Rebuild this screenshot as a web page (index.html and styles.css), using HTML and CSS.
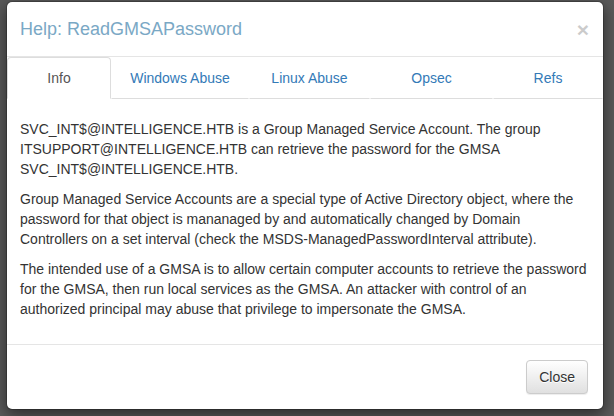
FILE: index.html
```html
<!DOCTYPE html>
<html>
<head>
<meta charset="utf-8">
<link rel="stylesheet" href="styles.css">
</head>
<body>
<div class="modal">
  <div class="modal-header">
    <span class="close">&times;</span>
    <h4 class="modal-title">Help: ReadGMSAPassword</h4>
  </div>
  <ul class="tabs">
    <li class="tab active">Info</li>
    <li class="tab">Windows Abuse</li>
    <li class="tab">Linux Abuse</li>
    <li class="tab">Opsec</li>
    <li class="tab">Refs</li>
  </ul>
  <div class="modal-body">
    <p>SVC_INT$@INTELLIGENCE.HTB is a Group Managed Service Account. The group ITSUPPORT@INTELLIGENCE.HTB can retrieve the password for the GMSA SVC_INT$@INTELLIGENCE.HTB.</p>
    <p>Group Managed Service Accounts are a special type of Active Directory object, where the password for that object is mananaged by and automatically changed by Domain Controllers on a set interval (check the MSDS-ManagedPasswordInterval attribute).</p>
    <p>The intended use of a GMSA is to allow certain computer accounts to retrieve the password for the GMSA, then run local services as the GMSA. An attacker with control of an authorized principal may abuse that privilege to impersonate the GMSA.</p>
  </div>
  <div class="modal-footer">
    <button class="btn">Close</button>
  </div>
</div>
</body>
</html>
```
FILE: styles.css
```css
html, body {
  margin: 0;
  height: 100%;
}
body {
  background: #5a5a5a;
  padding: 1px 10px 0 6px;
  box-sizing: border-box;
  font-family: "Liberation Sans", Arial, sans-serif;
  font-size: 14px;
  line-height: 20px;
  color: #333;
}
.modal {
  width: 598px;
  box-sizing: border-box;
  background: #fff;
  border: 1px solid rgba(0,0,0,.2);
  border-radius: 6px;
  box-shadow: 0 5px 15px rgba(0,0,0,.5);
  background-clip: padding-box;
}
.modal-header {
  padding: 15px 13px 14px 13px;
  border-bottom: 1px solid #e5e5e5;
}
.modal-title {
  margin: 0;
  font-size: 18px;
  font-weight: normal;
  line-height: 25px;
  color: #7aa8c5;
}
.close {
  float: right;
  font-size: 21px;
  font-weight: bold;
  line-height: 1;
  color: #000;
  opacity: .2;
  text-shadow: 0 1px 0 #fff;
  margin-top: 2px;
  margin-right: 1px;
}
.tabs {
  list-style: none;
  margin: 0;
  padding: 0;
  display: grid;
  grid-template-columns: 104px 138px 121px 123px 110px;
}
.tab {
  text-align: center;
  padding: 10px 0;
  line-height: 20px;
  color: #337ab7;
  border: 1px solid transparent;
  border-bottom-color: #ddd;
  border-radius: 4px 4px 0 0;
}
.tab.active {
  color: #555;
  border-color: #ddd;
  border-bottom-color: #fff;
}
.modal-body {
  padding: 20px 14px 15px 13px;
}
.modal-body p {
  margin: 0 0 10px 0;
}
.modal-footer {
  border-top: 1px solid #e5e5e5;
  padding: 15px;
  display: flex;
  justify-content: flex-end;
}
.btn {
  font-family: "Liberation Sans", Arial, sans-serif;
  font-size: 14px;
  line-height: 20px;
  padding: 6px 12px;
  color: #333;
  border: 1px solid #ccc;
  border-radius: 4px;
  background-image: linear-gradient(to bottom, #fff 0, #e0e0e0 100%);
  text-shadow: 0 1px 0 #fff;
  box-shadow: inset 0 1px 0 rgba(255,255,255,.15), 0 1px 1px rgba(0,0,0,.075);
}
```
